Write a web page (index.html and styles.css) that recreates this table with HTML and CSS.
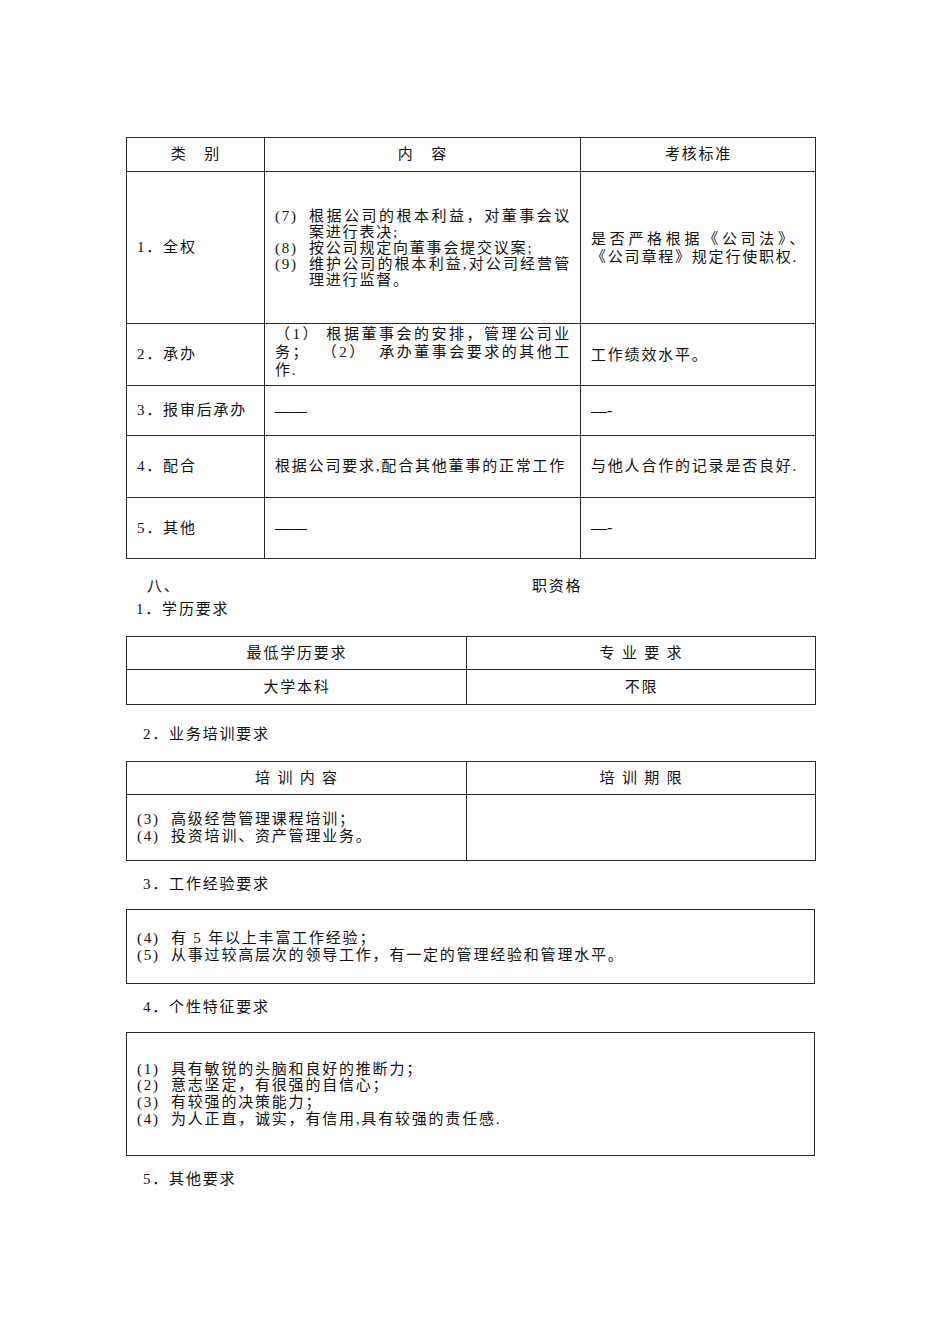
FILE: index.html
```html
<!DOCTYPE html>
<html lang="zh-CN">
<head>
<meta charset="utf-8">
<title>职资格</title>
<link rel="stylesheet" href="styles.css">
</head>
<body>
<div class="page">
  <table class="duty">
    <colgroup><col class="c1"><col class="c2"><col class="c3"></colgroup>
    <tr class="h-head">
      <td class="center">类&nbsp;&nbsp;&nbsp;别</td>
      <td class="center">内&nbsp;&nbsp;&nbsp;容</td>
      <td class="center">考核标准</td>
    </tr>
    <tr class="h-r1">
      <td>1．全权</td>
      <td class="lh16">
        <div class="item"><span class="num">(7)</span><span class="txt"><span class="jl">根据公司的根本利益，对董事会议</span>案进行表决;</span></div>
        <div class="item"><span class="num">(8)</span><span class="txt">按公司规定向董事会提交议案;</span></div>
        <div class="item"><span class="num">(9)</span><span class="txt"><span class="jl">维护公司的根本利益,对公司经营管</span>理进行监督。</span></div>
      </td>
      <td class="lh18"><span class="jl">是否严格根据《公司法》、</span>《公司章程》规定行使职权.</td>
    </tr>
    <tr class="h-r2">
      <td>2．承办</td>
      <td class="lh18 top">
        <span class="jl">（1） 根据董事会的安排，管理公司业</span><span class="jl">务；&nbsp;&nbsp;（2）&nbsp;&nbsp;承办董事会要求的其他工</span>作.
      </td>
      <td class="down">工作绩效水平。</td>
    </tr>
    <tr class="h-r3">
      <td>3．报审后承办</td>
      <td><span class="dash">——</span></td>
      <td><span class="dash">—-</span></td>
    </tr>
    <tr class="h-r4">
      <td>4．配合</td>
      <td>根据公司要求,配合其他董事的正常工作</td>
      <td>与他人合作的记录是否良好.</td>
    </tr>
    <tr class="h-r5">
      <td>5．其他</td>
      <td><span class="dash">——</span></td>
      <td><span class="dash">—-</span></td>
    </tr>
  </table>

  <div class="eight"><span class="eight-a">八、</span><span>职资格</span></div>
  <div class="sub sub-first">1．学历要求</div>

  <table class="two">
    <colgroup><col class="l"><col class="r"></colgroup>
    <tr class="h-33"><td>最低学历要求</td><td>专 业 要 求</td></tr>
    <tr class="h-35"><td>大学本科</td><td>不限</td></tr>
  </table>

  <div class="sub sub-gap">2．业务培训要求</div>

  <table class="two">
    <colgroup><col class="l"><col class="r"></colgroup>
    <tr class="h-33"><td>培 训 内 容</td><td>培 训 期 限</td></tr>
    <tr class="h-66">
      <td class="left lh17">
        <div class="item"><span class="num">(3)</span><span class="txt">高级经营管理课程培训；</span></div>
        <div class="item"><span class="num">(4)</span><span class="txt">投资培训、资产管理业务。</span></div>
      </td>
      <td></td>
    </tr>
  </table>

  <div class="sub">3．工作经验要求</div>

  <div class="box box-exp">
    <div class="item"><span class="num">(4)</span><span class="txt">有 5 年以上丰富工作经验；</span></div>
    <div class="item"><span class="num">(5)</span><span class="txt">从事过较高层次的领导工作，有一定的管理经验和管理水平。</span></div>
  </div>

  <div class="sub">4．个性特征要求</div>

  <div class="box box-per">
    <div class="item"><span class="num">(1)</span><span class="txt">具有敏锐的头脑和良好的推断力；</span></div>
    <div class="item"><span class="num">(2)</span><span class="txt">意志坚定，有很强的自信心；</span></div>
    <div class="item"><span class="num">(3)</span><span class="txt">有较强的决策能力；</span></div>
    <div class="item"><span class="num">(4)</span><span class="txt">为人正直，诚实，有信用,具有较强的责任感.</span></div>
  </div>

  <div class="sub">5．其他要求</div>
</div>
</body>
</html>
```

FILE: styles.css
```css
html, body {
  margin: 0;
  padding: 0;
  background: #ffffff;
}

body {
  font-family: "Liberation Serif", "Noto Sans CJK SC", serif;
  font-size: 15px;
  letter-spacing: 1.8px;
  color: #111111;
}

.page {
  width: 689px;
  margin-left: 126px;
  padding-top: 137px;
}

table {
  border-collapse: collapse;
  table-layout: fixed;
  width: 689px;
}

td {
  border: 1px solid #2a2a2a;
  padding: 0 9px 0 10px;
  vertical-align: middle;
  line-height: 17px;
}

.duty .c1 { width: 138px; }
.duty .c2 { width: 316px; }
.duty .c3 { width: 235px; }

.h-head { height: 34px; }
.h-r1 { height: 152px; }
.h-r2 { height: 62px; }
.h-r3 { height: 50px; }
.h-r4 { height: 62px; }
.h-r5 { height: 61px; }

.center { text-align: center; }

.lh16 { line-height: 16px; }
.lh18 { line-height: 18px; }
.lh17 { line-height: 17px; }

.top { padding-bottom: 6px; }
.down { padding-top: 2px; }

.dash {
  font-size: 16px;
  letter-spacing: 0;
}

.item { display: flex; }
.num { width: 34px; flex: none; }
.txt { flex: 1; }

.jl {
  display: block;
  text-align: justify;
  text-align-last: justify;
}

.eight {
  margin-top: 16px;
  padding-left: 21px;
  line-height: 23px;
  display: flex;
}

.eight-a { width: 385px; flex: none; }

.sub {
  line-height: 23px;
  padding-left: 17px;
  margin-top: 12px;
  margin-bottom: 13px;
}

.sub-first {
  margin-top: 0;
  padding-left: 10px;
  margin-bottom: 15px;
}

.sub-gap {
  margin-top: 18px;
  margin-bottom: 15px;
}

.two .l { width: 340px; }
.two .r { width: 349px; }
.two td { text-align: center; }
.two td.left { text-align: left; }

.h-33 { height: 33px; }
.h-35 { height: 35px; }
.h-66 { height: 66px; }

.box {
  border: 1px solid #2a2a2a;
  box-sizing: border-box;
  padding: 0 10px;
  display: flex;
  flex-direction: column;
  justify-content: center;
}

.box-exp { height: 75px; line-height: 17px; }
.box-per { height: 124px; line-height: 16.7px; }
```
